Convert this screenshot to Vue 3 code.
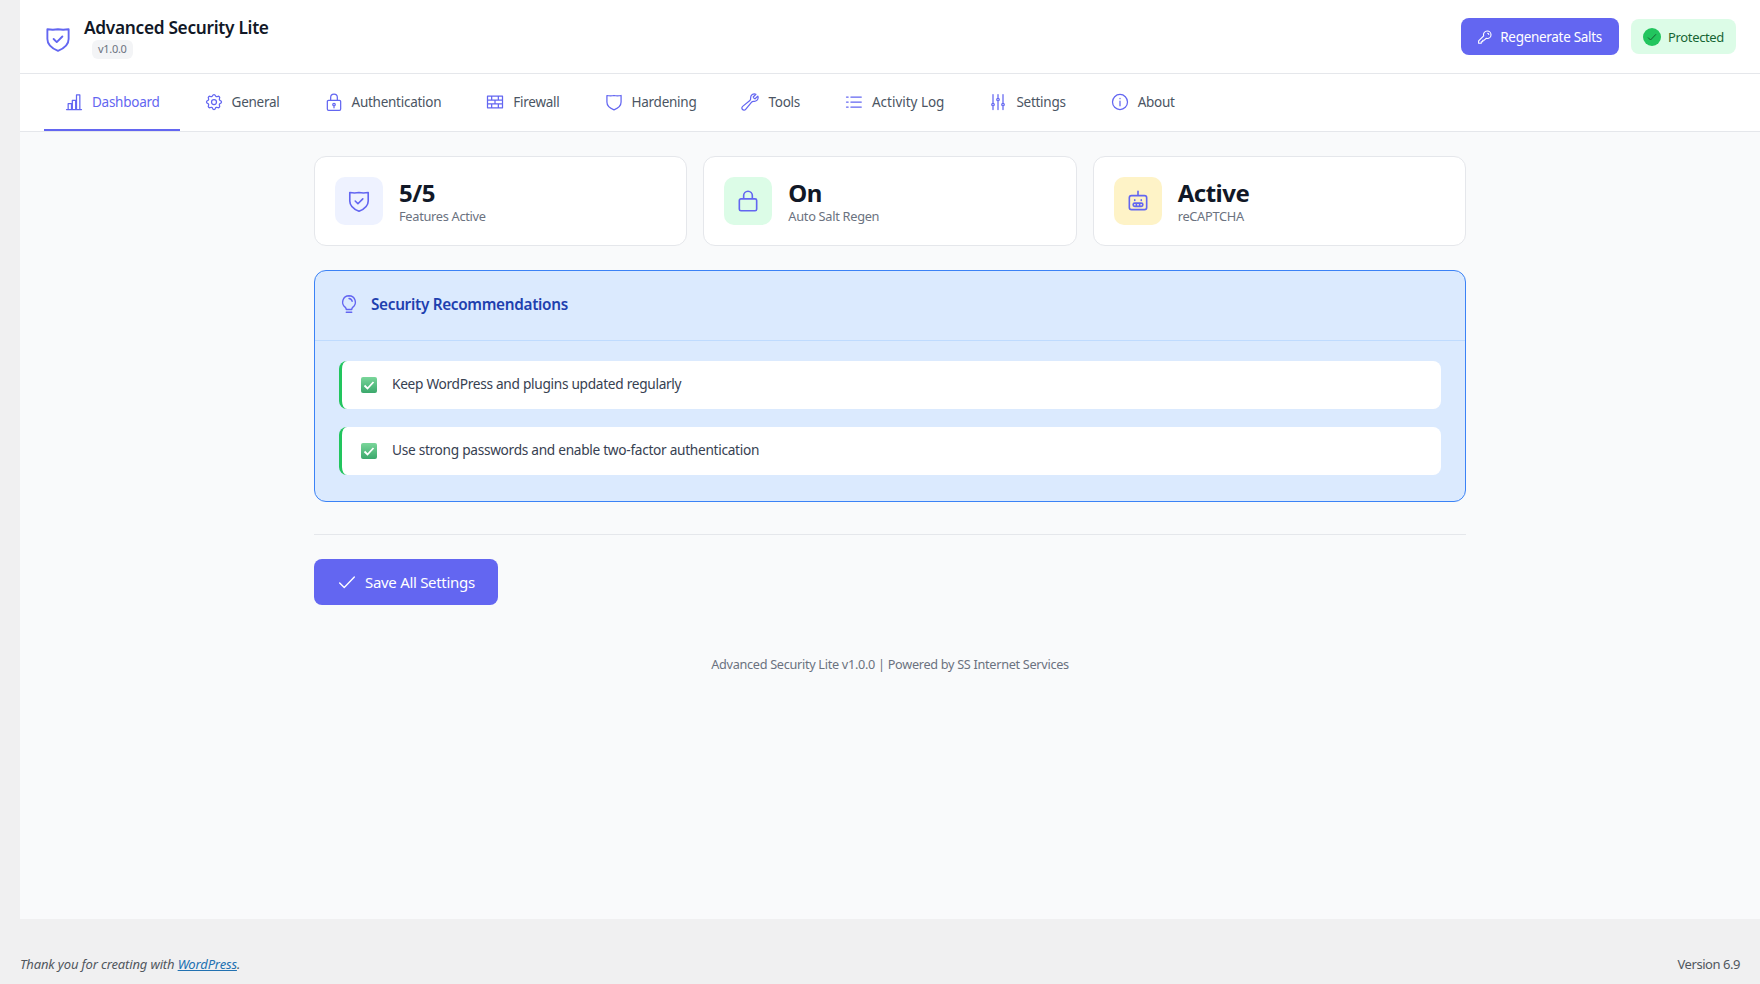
<script setup>
const icons = {
  shieldCheck: 'M3.5 4.2c3 .5 5.8 .5 8.5 0c2.7 .5 5.5 .5 8.5 0V12c0 4.5-3.5 7.5-8.5 9.5C7 19.5 3.5 16.5 3.5 12zM8.5 12l2.5 2.5l4.5-4.5',
  shield: 'M3.5 4.2c3 .5 5.8 .5 8.5 0c2.7 .5 5.5 .5 8.5 0V12c0 4.5-3.5 7.5-8.5 9.5C7 19.5 3.5 16.5 3.5 12z',
  chart: 'M3 21h18M5 21v-7h4v7M10 21V10h4v11M15 21V3.500h4V21',
  gear: 'M10.325 4.317c.426-1.756 2.924-1.756 3.35 0a1.724 1.724 0 0 0 2.573 1.066c1.543-.94 3.31 .826 2.37 2.37a1.724 1.724 0 0 0 1.065 2.572c1.756 .426 1.756 2.924 0 3.35a1.724 1.724 0 0 0-1.066 2.573c.94 1.543-.826 3.31-2.37 2.37a1.724 1.724 0 0 0-2.572 1.065c-.426 1.756-2.924 1.756-3.35 0a1.724 1.724 0 0 0-2.573-1.066c-1.543 .94-3.31-.826-2.37-2.37a1.724 1.724 0 0 0-1.065-2.572c-1.756-.426-1.756-2.924 0-3.35a1.724 1.724 0 0 0 1.066-2.573c-.94-1.543 .826-3.31 2.37-2.37c1 .608 2.296 .07 2.572-1.065zM9 12a3 3 0 1 0 6 0a3 3 0 1 0-6 0',
  lockKey: 'M5.500 10h13a1.500 1.500 0 0 1 1.500 1.500v9a1.500 1.500 0 0 1-1.500 1.500h-13A1.500 1.500 0 0 1 4 20.500v-9A1.500 1.500 0 0 1 5.500 10zM8 10V6.500a4 4 0 0 1 8 0V10M10.500 15a1.500 1.500 0 1 0 3 0a1.500 1.500 0 1 0-3 0M12 16.500V19',
  lock: 'M5.500 10h13a1.500 1.500 0 0 1 1.500 1.500v8a1.500 1.500 0 0 1-1.500 1.500h-13A1.500 1.500 0 0 1 4 19.500v-8A1.500 1.500 0 0 1 5.500 10zM8 10V7a4 4 0 0 1 8 0v3',
  firewall: 'M3 5h18v14H3zM3 9.670h18M3 14.330h18M8 5v4.670M16 5v4.670M12 9.670v4.660M8 14.330V19M16 14.330V19',
  wrench: 'M21.750 6.750a4.500 4.500 0 0 1-4.884 4.484c-1.076-.091-2.264 .071-2.950 .904l-7.152 8.684a2.548 2.548 0 1 1-3.586-3.586l8.684-7.152c.833-.686 .995-1.874 .904-2.950a4.500 4.500 0 0 1 6.336-4.486l-3.276 3.276a3.004 3.004 0 0 0 2.250 2.250l3.276-3.276c.256 .565 .398 1.192 .398 1.852z',
  list: 'M8.250 6h12.500M8.250 12h12.500M8.250 18h12.500M3 6h2M3 12h2M3 18h2',
  sliders: 'M6 13.500V3M6 13.500a1.500 1.500 0 0 1 0 3M6 13.500a1.500 1.500 0 0 0 0 3M6 21v-4.500M18 13.500V3M18 13.500a1.500 1.500 0 0 1 0 3M18 13.500a1.500 1.500 0 0 0 0 3M18 21v-4.500M12 7.500V3M12 7.500a1.500 1.500 0 0 1 0 3M12 7.500a1.500 1.500 0 0 0 0 3M12 21V10.500',
  info: 'M3 12a9 9 0 1 0 18 0a9 9 0 1 0-18 0M12 11v5.500M12 7.500v.5',
  key: 'M15 4a5 5 0 0 1 0 10a5 5 0 0 1-1.500-.2L11 16.300H9V18.300H7V20.300H3.500V17.300L10.200 10.500A5 5 0 0 1 15 4zM15.500 7a1.500 1.500 0 0 1 1.500 1.500',
  bulb: 'M12 3a7 7 0 0 0-4 12.700c.7 .6 1 1.300 1 2.300h6c0-1 .3-1.700 1-2.300A7 7 0 0 0 12 3zM9 21h6M12 6a4 4 0 0 1 3.500 3',
  bot: 'M12 3v4M6 7h12a2 2 0 0 1 2 2v9a2 2 0 0 1-2 2H6a2 2 0 0 1-2-2V9a2 2 0 0 1 2-2zM9 11v.5M15 11v.5M9 14h6a1.500 1.500 0 0 1 0 3H9a1.500 1.500 0 0 1 0-3zM10.500 14v3M13.500 14v3',
  check: 'M4 13l5 5L20 6.500',
}

const tabs = [
  { label: 'Dashboard', icon: 'chart', active: true },
  { label: 'General', icon: 'gear' },
  { label: 'Authentication', icon: 'lockKey' },
  { label: 'Firewall', icon: 'firewall' },
  { label: 'Hardening', icon: 'shield' },
  { label: 'Tools', icon: 'wrench' },
  { label: 'Activity Log', icon: 'list', wide: true },
  { label: 'Settings', icon: 'sliders' },
  { label: 'About', icon: 'info' },
]

const stats = [
  { value: '5/5', label: 'Features Active', icon: 'shieldCheck', tone: 'indigo' },
  { value: 'On', label: 'Auto Salt Regen', icon: 'lock', tone: 'green' },
  { value: 'Active', label: 'reCAPTCHA', icon: 'bot', tone: 'amber' },
]

const tips = [
  'Keep WordPress and plugins updated regularly',
  'Use strong passwords and enable two-factor authentication',
]
</script>

<template>
  <div class="page">
    <div class="main">
      <header class="topbar">
        <div class="brand">
          <svg class="icon logo" viewBox="0 0 24 24"><path :d="icons.shieldCheck" /></svg>
          <div>
            <h1 class="title">Advanced Security Lite</h1>
            <span class="version">v1.0.0</span>
          </div>
        </div>
        <div class="actions">
          <button class="btn-salts">
            <svg class="icon white" viewBox="0 0 24 24"><path :d="icons.key" /></svg>
            Regenerate Salts
          </button>
          <div class="status">
            <span class="status-dot">
              <svg viewBox="0 0 24 24"><path :d="icons.check" /></svg>
            </span>
            Protected
          </div>
        </div>
      </header>

      <nav class="tabs">
        <a v-for="tab in tabs" :key="tab.label" class="tab" :class="{ active: tab.active, wide: tab.wide }">
          <svg class="icon" viewBox="0 0 24 24"><path :d="icons[tab.icon]" /></svg>
          {{ tab.label }}
        </a>
      </nav>

      <main class="content">
        <section class="stats">
          <div v-for="stat in stats" :key="stat.label" class="stat">
            <div class="stat-icon" :class="stat.tone">
              <svg class="icon" viewBox="0 0 24 24"><path :d="icons[stat.icon]" /></svg>
            </div>
            <div class="stat-text">
              <div class="stat-value">{{ stat.value }}</div>
              <div class="stat-label">{{ stat.label }}</div>
            </div>
          </div>
        </section>

        <section class="panel">
          <div class="panel-head">
            <svg class="icon" viewBox="0 0 24 24"><path :d="icons.bulb" /></svg>
            <h2>Security Recommendations</h2>
          </div>
          <div class="panel-body">
            <div v-for="tip in tips" :key="tip" class="tip">
              <svg class="tick" viewBox="0 0 16 16">
                <defs>
                  <linearGradient id="tickFill" x1="0" y1="0" x2="0" y2="1">
                    <stop offset="0" stop-color="#7ad69a" />
                    <stop offset="1" stop-color="#3ba86c" />
                  </linearGradient>
                </defs>
                <rect width="16" height="16" rx="2" fill="url(#tickFill)" />
                <path d="M3.500 8.500l3 3l6-6.500" fill="none" stroke="#fff" stroke-width="1.800" />
              </svg>
              <span class="tip-text">{{ tip }}</span>
            </div>
          </div>
        </section>

        <div class="save-row">
          <button class="btn-save">
            <svg class="icon white" viewBox="0 0 24 24"><path :d="icons.check" /></svg>
            Save All Settings
          </button>
        </div>

        <p class="credit">Advanced Security Lite v1.0.0 | Powered by SS Internet Services</p>
      </main>
    </div>

    <footer class="wp-footer">
      <em>Thank you for creating with <a>WordPress</a>.</em>
      <span class="wp-version">Version 6.9</span>
    </footer>
  </div>
</template>

<style>
body {
  background: #f0f0f1;
}
</style>

<style scoped>
.page {
  min-height: 984px;
  padding-left: 20px;
  font-family: "Noto Sans", "Open Sans", sans-serif;
  color: #374151;
  letter-spacing: -0.3px;
}

.main {
  height: 919px;
  background: #f9fafb;
}

.icon {
  width: 20px;
  height: 20px;
  flex-shrink: 0;
  fill: none;
  stroke: #6366f1;
  stroke-width: 1.5;
  stroke-linecap: round;
  stroke-linejoin: round;
}

.icon.white {
  stroke: #fff;
}

.topbar {
  height: 73px;
  display: flex;
  align-items: center;
  justify-content: space-between;
  padding: 0 24px;
  background: #fff;
  border-bottom: 1px solid #e5e7eb;
}

.brand {
  display: flex;
  align-items: center;
  gap: 12px;
}

.logo {
  width: 30px;
  height: 30px;
  margin: 4px -1px 0;
}

.title {
  margin: 0 0 -1px;
  font-size: 17.3px;
  line-height: 26px;
  font-weight: 600;
  color: #111827;
}

.version {
  display: block;
  width: fit-content;
  margin-left: 8px;
  padding: 0 6px;
  height: 19px;
  line-height: 18px;
  font-size: 11px;
  color: #6b7280;
  background: #f3f4f6;
  border-radius: 6px;
}

.actions {
  display: flex;
  align-items: center;
  gap: 12px;
}

.btn-salts {
  display: flex;
  align-items: center;
  gap: 6px;
  height: 37px;
  padding: 0 17px 0 15px;
  border: 0;
  border-radius: 8px;
  background: #6366f1;
  color: #fff;
  font: inherit;
  font-size: 13.5px;
  letter-spacing: inherit;
}

.btn-salts .icon {
  width: 18px;
  height: 18px;
}

.status {
  display: flex;
  align-items: center;
  gap: 7px;
  height: 35px;
  padding: 0 12px;
  border-radius: 8px;
  background: #dcfce7;
  color: #166534;
  font-size: 13px;
  letter-spacing: -0.35px;
}

.status-dot {
  display: flex;
  align-items: center;
  justify-content: center;
  width: 18px;
  height: 18px;
  border-radius: 50%;
  background: #22c55e;
}

.status-dot svg {
  width: 12px;
  height: 12px;
  fill: none;
  stroke: #14532d;
  stroke-width: 1.8;
}

.tabs {
  display: flex;
  gap: 4px;
  height: 57px;
  padding: 0 24px;
  background: #fff;
  border-bottom: 1px solid #e5e7eb;
}

.tab {
  display: flex;
  align-items: center;
  gap: 8px;
  padding: 0 20px;
  font-size: 13.5px;
  letter-spacing: -0.26px;
  color: #4b5563;
  border-bottom: 2px solid transparent;
}

.tab.wide {
  letter-spacing: -0.02px;
}

.tab.active {
  color: #6366f1;
  border-bottom-color: #6366f1;
}

.content {
  width: 1152px;
  margin: 24px auto 0;
}

.stats {
  display: grid;
  grid-template-columns: repeat(3, 1fr);
  gap: 16px;
}

.stat {
  display: flex;
  align-items: center;
  gap: 16px;
  padding: 20px;
  background: #fff;
  border: 1px solid #e5e7eb;
  border-radius: 12px;
}

.stat-icon {
  display: flex;
  align-items: center;
  justify-content: center;
  width: 48px;
  height: 48px;
  border-radius: 10px;
}

.stat-icon .icon {
  width: 26px;
  height: 26px;
}

.indigo {
  background: #eef2ff;
}

.green {
  background: #dcfce7;
}

.amber {
  background: #fef3c7;
}

.stat-text {
  margin-top: 2px;
}

.stat-value {
  font-size: 24px;
  line-height: 28px;
  font-weight: 700;
  letter-spacing: -0.5px;
  color: #111827;
}

.stat-label {
  font-size: 12.8px;
  line-height: 18px;
  color: #6b7280;
}

.panel {
  margin-top: 24px;
  background: #dbeafe;
  border: 1px solid #3b82f6;
  border-radius: 12px;
}

.panel-head {
  display: flex;
  align-items: center;
  gap: 11px;
  height: 70px;
  padding: 0 24px 4px 23px;
  box-sizing: border-box;
  border-bottom: 1px solid #bfdbfe;
}

.panel-head .icon {
  width: 22px;
  height: 22px;
}

.panel-head h2 {
  margin: 0;
  font-size: 15.3px;
  font-weight: 600;
  color: #1e40af;
}

.panel-body {
  display: flex;
  flex-direction: column;
  gap: 18px;
  padding: 20px 24px 26px;
}

.tip {
  display: flex;
  align-items: center;
  gap: 15px;
  height: 48px;
  padding-left: 19px;
  background: #fff;
  border-left: 3px solid #22c55e;
  border-radius: 8px;
  font-size: 13.7px;
  color: #374151;
}

.tip-text {
  margin-top: -3px;
}

.tick {
  width: 16px;
  height: 16px;
  flex-shrink: 0;
}

.save-row {
  margin-top: 32px;
  padding-top: 24px;
  border-top: 1px solid #e5e7eb;
}

.btn-save {
  display: flex;
  align-items: center;
  gap: 7px;
  width: 184px;
  height: 46px;
  padding: 0 22px;
  border: 0;
  border-radius: 8px;
  background: #6366f1;
  color: #fff;
  font: inherit;
  font-size: 15px;
  letter-spacing: inherit;
}

.btn-save .icon {
  width: 22px;
  height: 22px;
}

.credit {
  margin: 49px 0 0;
  text-align: center;
  font-size: 12.7px;
  line-height: 20px;
  color: #6b7280;
}

.wp-footer {
  display: flex;
  justify-content: space-between;
  align-items: center;
  height: 65px;
  padding: 25px 20px 0 0;
  box-sizing: border-box;
  font-size: 13px;
  color: #50575e;
}

.wp-footer em {
  letter-spacing: -0.15px;
}

.wp-version {
  letter-spacing: -0.45px;
}

.wp-footer a {
  color: #2271b1;
  text-decoration: underline;
}
</style>
